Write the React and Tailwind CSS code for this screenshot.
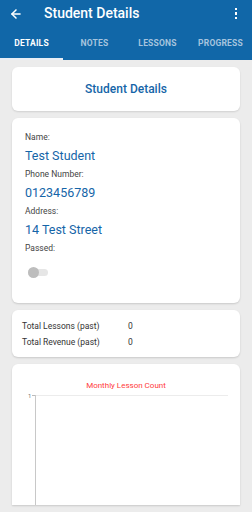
import React from 'react';
import { ArrowLeft } from 'lucide-react';

const tabs = ['Details', 'Notes', 'Lessons', 'Progress'];

const Field = ({ label, value }) => (
    <div>
        <div className="text-[8.5px] leading-[11px] text-[#444]">{label}</div>
        <div className="text-[12.5px] leading-[26px] text-[#1565a8]">{value}</div>
    </div>
);

const App = () => {
    return (
        <div className="w-[252px] h-[512px] overflow-hidden bg-[#ececec] flex flex-col" style={{ fontFamily: 'Roboto, "Noto Sans", sans-serif' }}>
            {/* Header */}
            <div className="bg-[#1167a8] shrink-0">
                <div className="h-[27px] flex items-center px-[9px]">
                    <ArrowLeft size={14} strokeWidth={2.6} className="text-white" />
                    <span className="ml-[21px] text-white text-[14px] font-medium">Student Details</span>
                    <div className="ml-auto mr-[6px] flex flex-col gap-[2px]">
                        <span className="w-[2.5px] h-[2.5px] bg-white" />
                        <span className="w-[2.5px] h-[2.5px] bg-white" />
                        <span className="w-[2.5px] h-[2.5px] bg-white" />
                    </div>
                </div>
                <div className="h-[33px] grid grid-cols-4">
                    {tabs.map((t, i) => (
                        <div key={t} className={`flex items-center justify-center pt-[2px] text-[8.5px] font-bold uppercase tracking-[0.2px] ${i === 0 ? 'text-white border-b-2 border-[#e8eef5]' : 'text-[#a6c4de] border-b-2 border-transparent'}`}>
                            {t}
                        </div>
                    ))}
                </div>
            </div>

            <div className="flex flex-col gap-[7px] px-[12px] pt-[7px]">
                {/* Title card */}
                <div className="bg-white rounded-[6px] shadow-[0_1px_2px_rgba(0,0,0,0.12)] h-[44px] flex items-center justify-center">
                    <span className="text-[#1565a8] text-[12px] font-medium">Student Details</span>
                </div>

                {/* Info card */}
                <div className="bg-white rounded-[6px] shadow-[0_1px_2px_rgba(0,0,0,0.15)] h-[185px] px-[13px] pt-[14px]">
                    <Field label="Name:" value="Test Student" />
                    <Field label="Phone Number:" value="0123456789" />
                    <Field label="Address:" value="14 Test Street" />
                    <div className="text-[8.5px] leading-[11px] text-[#444]">Passed:</div>
                    <div className="mt-[13px] ml-[3px] relative w-[21px] h-[11px] flex items-center">
                        <div className="w-[20px] h-[7px] rounded-full bg-[#e6e6e6]" />
                        <div className="absolute left-0 top-0 w-[11px] h-[11px] rounded-full bg-[#bdbdbd]" />
                    </div>
                </div>

                {/* Totals card */}
                <div className="bg-white rounded-[6px] shadow-[0_1px_2px_rgba(0,0,0,0.15)] h-[47px] px-[10px] flex flex-col justify-center gap-[4px] text-[8.5px] text-[#333]">
                    <div className="flex leading-[12px]"><span className="w-[106px]">Total Lessons (past)</span><span>0</span></div>
                    <div className="flex leading-[12px]"><span className="w-[106px]">Total Revenue (past)</span><span>0</span></div>
                </div>

                {/* Chart card */}
                <div className="bg-white rounded-t-[6px] shadow-[0_1px_2px_rgba(0,0,0,0.15)] h-[141px] flex flex-col">
                    <div className="text-center text-[#ff3b3b] text-[8px] pt-[17px] leading-[10px]">Monthly Lesson Count</div>
                    <svg width="227" height="120" className="mt-[2px]">
                        <text x="16" y="5" fontSize="6" fill="#777" fontFamily="Roboto, sans-serif">1</text>
                        <line x1="21" y1="2.5" x2="216" y2="2.5" stroke="#ececec" strokeWidth="1" />
                        <line x1="20" y1="2.5" x2="24" y2="2.5" stroke="#bbb" strokeWidth="1" />
                        <line x1="23.5" y1="2" x2="23.5" y2="120" stroke="#c8c8c8" strokeWidth="1" />
                    </svg>
                </div>
            </div>
        </div>
    );
};

export default App;
